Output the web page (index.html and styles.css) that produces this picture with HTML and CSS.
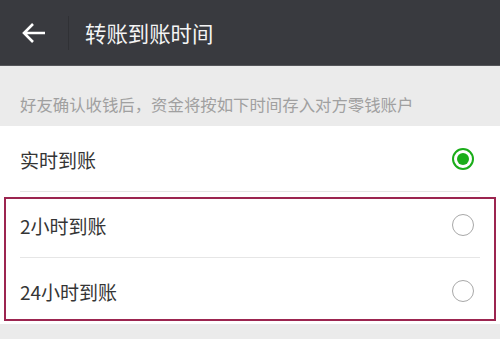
FILE: index.html
```html
<!DOCTYPE html>
<html lang="zh-CN">
<head>
<meta charset="utf-8">
<link rel="stylesheet" href="styles.css">
</head>
<body>
<div class="page">
  <header class="topbar">
    <div class="back">
      <svg width="26" height="22" viewBox="0 0 26 22" aria-hidden="true">
        <path d="M24 11 H3 M12 2 L3 11 L12 20" fill="none" stroke="#ffffff" stroke-width="2.6" stroke-linecap="butt" stroke-linejoin="miter"/>
      </svg>
    </div>
    <div class="sep"></div>
    <h1 class="title">转账到账时间</h1>
  </header>
  <p class="hint">好友确认收钱后，资金将按如下时间存入对方零钱账户</p>
  <div class="list">
    <div class="row">
      <span class="label">实时到账</span>
      <span class="radio checked"></span>
    </div>
    <div class="group">
      <div class="row">
        <span class="label">2小时到账</span>
        <span class="radio"></span>
      </div>
      <div class="row last">
        <span class="label">24小时到账</span>
        <span class="radio"></span>
      </div>
      <div class="mark"></div>
    </div>
  </div>
</div>
</body>
</html>
```
FILE: styles.css
```css
* { box-sizing: border-box; }
html, body {
  margin: 0;
  padding: 0;
  background: #ebebeb;
  font-family: "Noto Sans CJK SC", "Noto Sans", sans-serif;
}
.page {
  width: 500px;
  height: 339px;
  overflow: hidden;
  background: #ebebeb;
}
.topbar {
  height: 66px;
  background: #393a3f;
  border-bottom: 1px solid #55565a;
  display: flex;
  align-items: center;
}
.back {
  width: 68px;
  display: flex;
  align-items: center;
  padding-left: 21px;
  height: 100%;
}
.back svg { display: block; }
.sep {
  width: 1px;
  height: 34px;
  background: #303135;
}
.title {
  margin: 0 0 0 16px;
  font-size: 21.4px;
  font-weight: 400;
  color: #f4f4f4;
  line-height: 1;
}
.hint {
  margin: 0;
  height: 60px;
  padding: 28px 0 0 20px;
  font-size: 16.4px;
  line-height: 20px;
  color: #a0a0a0;
  white-space: nowrap;
}
.list {
  background: #ffffff;
}
.row {
  position: relative;
  height: 66px;
  display: flex;
  align-items: center;
  justify-content: space-between;
  padding: 0 26px 0 20px;
}
.row::after {
  content: "";
  position: absolute;
  left: 20px;
  right: 20px;
  bottom: 0;
  height: 1px;
  background: #e6e6e6;
}
.row.last::after { display: none; }
.label {
  font-size: 19px;
  color: #353535;
  line-height: 1;
}
.radio {
  width: 22px;
  height: 22px;
  border-radius: 50%;
  border: 1.6px solid #a8a8a8;
  display: flex;
  align-items: center;
  justify-content: center;
}
.radio.checked {
  border: 2px solid #1aad19;
}
.radio.checked::before {
  content: "";
  width: 12px;
  height: 12px;
  border-radius: 50%;
  background: #1aad19;
}
.group {
  position: relative;
}
.mark {
  position: absolute;
  top: 5px;
  bottom: 3px;
  left: 4px;
  right: 4px;
  border: 2px solid #9c2550;
  pointer-events: none;
}
```
